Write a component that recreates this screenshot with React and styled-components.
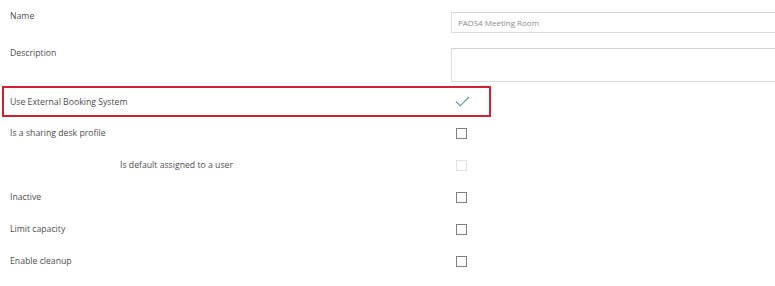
import React from "react";
import styled, { createGlobalStyle } from "styled-components";

const GlobalStyle = createGlobalStyle`
  html, body {
    margin: 0;
    padding: 0;
    background: #fff;
    overflow: hidden;
  }
  body {
    font-family: "Open Sans", "Noto Sans", sans-serif;
  }
`;

const Form = styled.div`
  width: 775px;
  height: 286px;
  padding: 12px 0 0 2px;
  box-sizing: border-box;
  overflow: hidden;
  display: flex;
  flex-direction: column;
`;

const Row = styled.div`
  display: flex;
  align-items: ${(p) => (p.$top ? "flex-start" : "center")};
  height: ${(p) => p.$height}px;
  margin-top: ${(p) => p.$gap || 0}px;
  padding-left: 8px;
  box-sizing: border-box;
  flex-shrink: 0;
`;

const HighlightRow = styled(Row)`
  width: 489px;
  border: 2px solid #d42030;
  padding-left: 6px;
`;

const Label = styled.div`
  width: ${(p) => p.$width || 441}px;
  flex-shrink: 0;
  padding-left: ${(p) => p.$indent || 0}px;
  box-sizing: border-box;
  font-size: 8.7px;
  line-height: 14px;
  color: #4d4d4d;
  margin-top: ${(p) => p.$offset || 0}px;
`;

const TextInput = styled.div`
  width: 340px;
  height: ${(p) => p.$height}px;
  border: 1px solid #dcdcdc;
  border-top-color: #d2d2d2;
  box-sizing: border-box;
  padding: 0 6px;
  display: flex;
  align-items: center;
  font-size: 8px;
  color: #8c8c8c;
  flex-shrink: 0;
`;

const CheckCell = styled.div`
  padding-left: ${(p) => p.$pad}px;
  display: flex;
  align-items: center;
`;

const Box = styled.div`
  width: 11px;
  height: 11px;
  box-sizing: border-box;
  border: 1px solid ${(p) => (p.$disabled ? "#e2e2e2" : "#808080")};
  background: #fff;
`;

const Check = () => (
  <svg width="15" height="11" viewBox="0 0 15 11">
    <path
      d="M1 5.5 L5.2 9.8 L14 1"
      fill="none"
      stroke="#4a9d90"
      strokeWidth="1.1"
    />
  </svg>
);

const checks = [
  { label: "Is a sharing desk profile" },
  { label: "Is default assigned to a user", indent: 110, disabled: true },
  { label: "Inactive" },
  { label: "Limit capacity" },
  { label: "Enable cleanup" },
];

export default function App() {
  return (
    <>
      <GlobalStyle />
      <Form>
        <Row $height={21} $top>
          <Label $offset={-3}>Name</Label>
          <TextInput $height={21}>PADS4 Meeting Room</TextInput>
        </Row>
        <Row $height={34} $gap={15} $top>
          <Label $offset={-2}>Description</Label>
          <TextInput $height={34} />
        </Row>
        <HighlightRow $height={31} $gap={4}>
          <Label>Use External Booking System</Label>
          <CheckCell $pad={4}>
            <Check />
          </CheckCell>
        </HighlightRow>
        {checks.map((c) => (
          <Row key={c.label} $height={32}>
            <Label $indent={c.indent}>{c.label}</Label>
            <CheckCell $pad={5}>
              <Box $disabled={c.disabled} />
            </CheckCell>
          </Row>
        ))}
      </Form>
    </>
  );
}
